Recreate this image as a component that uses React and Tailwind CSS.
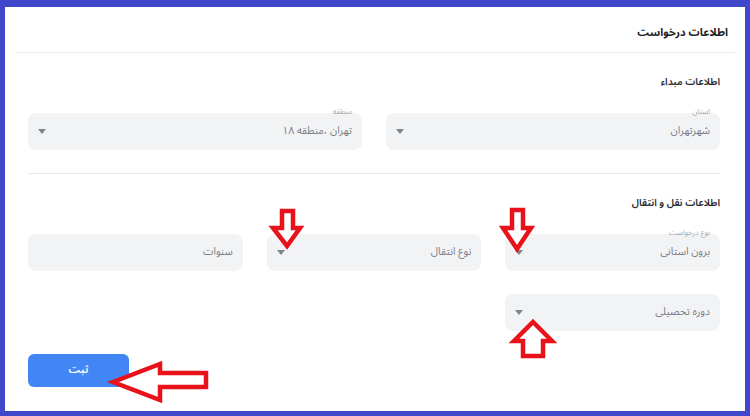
const font = { fontFamily: '"Noto Sans Arabic", "Vazirmatn", "DejaVu Sans", sans-serif' };

const Caret = () => (
  <svg width="8" height="5" viewBox="0 0 8 5" className="shrink-0">
    <path d="M0 0 L8 0 L4 5 Z" fill="#80848b" />
  </svg>
);

const Field = ({ label, value, select = true }) => (
  <div className="relative flex h-[37px] items-center justify-between rounded-[8px] bg-[#f2f3f5] pr-[10px] pl-[10px]">
    {label && (
      <span className="absolute -top-[6px] right-[10px] text-[7.5px] leading-[10px] text-[#a3a7ae]">
        {label}
      </span>
    )}
    <span className="text-[10.5px] text-[#7a7e85]">{value}</span>
    {select && <Caret />}
  </div>
);

const Arrows = () => (
  <svg
    width="750"
    height="416"
    viewBox="0 0 750 416"
    className="pointer-events-none absolute left-0 top-0"
  >
    <g fill="#ffffff" stroke="#e8121b" strokeWidth="4.5" strokeLinejoin="miter">
      <polygon points="282,211 293,211 293,228 300,228 287,246 273,228 282,228" />
      <polygon points="512,210 523,210 523,228 531,228 517,249 503,228 512,228" />
      <polygon points="533,322 552,341 543,341 543,356 523,356 523,341 514,341" />
      <polygon points="113,382 160,364 160,373 206,373 206,387 160,387 160,400" />
    </g>
  </svg>
);

export default function App() {
  return (
    <div className="relative h-[416px] w-[750px] bg-[#4147cb] pt-[7px] pr-[5px] pb-[5px] pl-[5px]" style={font}>
      <div dir="rtl" className="flex h-full flex-col bg-white">
        <div className="mx-[10px] border-b border-[#e8e9ec] pt-[17px] pb-[11px] pr-[7px]">
          <h1 className="text-[11px] font-bold leading-[17px] text-[#1f2226]">اطلاعات درخواست</h1>
        </div>

        <div className="flex flex-col pr-[25px] pl-[23px]">
          <h2 className="mt-[21px] text-[10px] font-semibold leading-[16px] text-[#26292e]">اطلاعات مبداء</h2>
          <div className="mt-[23px] grid grid-cols-2 gap-6">
            <Field label="استان" value="شهرتهران" />
            <Field label="منطقه" value="تهران ،منطقه ۱۸" />
          </div>

          <div className="mt-[23px] border-b border-[#e8e9ec]" />

          <h2 className="mt-[21px] text-[10px] font-semibold leading-[16px] text-[#26292e]">اطلاعات نقل و انتقال</h2>
          <div className="mt-[23px] grid grid-cols-3 gap-x-6 gap-y-[23px]">
            <Field label="نوع درخواست" value="برون استانی" />
            <Field value="نوع انتقال" />
            <Field value="سنوات" select={false} />
            <Field value="دوره تحصیلی" />
          </div>

          <div className="mt-[23px] flex justify-end">
            <button
              type="button"
              className="h-[33px] w-[101px] rounded-[6px] bg-[#4285f4] text-[11px] font-semibold text-white"
            >
              ثبت
            </button>
          </div>
        </div>
      </div>
      <Arrows />
    </div>
  );
}
